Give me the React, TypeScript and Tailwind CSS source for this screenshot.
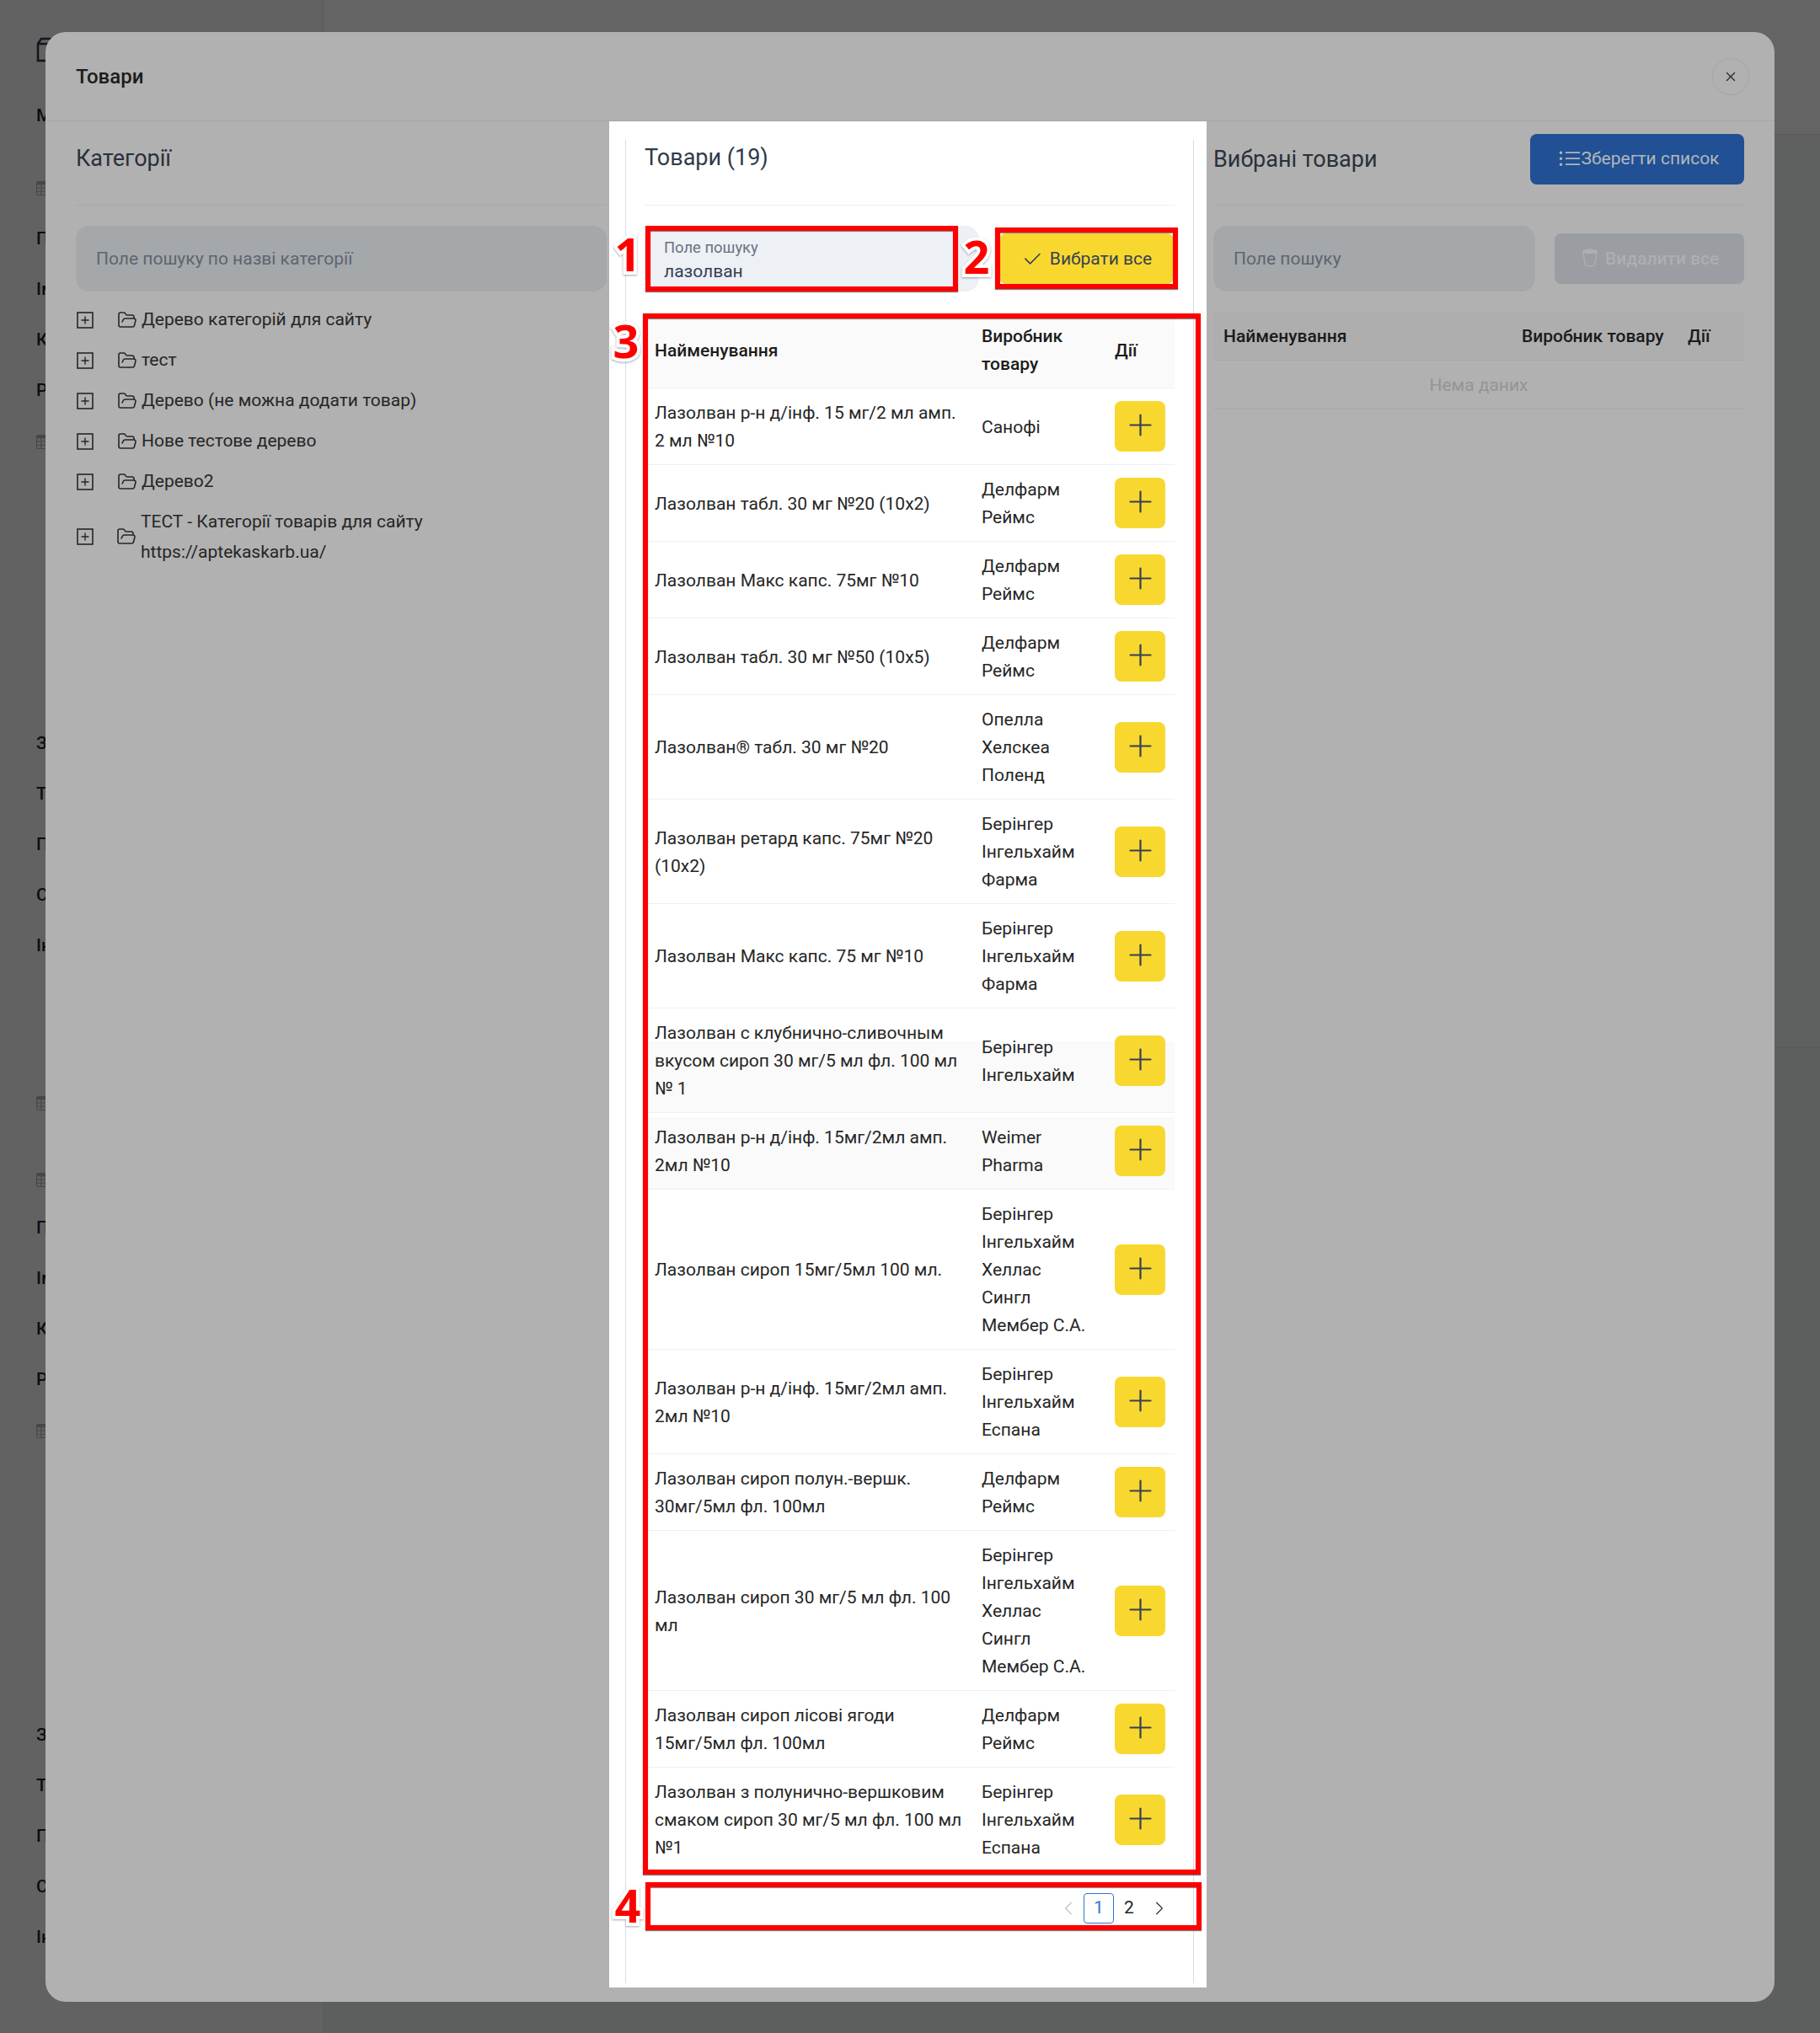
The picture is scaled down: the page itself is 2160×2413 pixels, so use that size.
import React from "react";
import {BsCheck2, BsChevronLeft, BsChevronRight, BsListUl, BsTable, BsTrash2, BsX} from "react-icons/bs";
import {FolderOpen, Plus} from "lucide-react";

const categories = [
    "Дерево категорій для сайту",
    "тест",
    "Дерево (не можна додати товар)",
    "Нове тестове дерево",
    "Дерево2",
];

const products = [
    {name: "Лазолван р-н д/інф. 15 мг/2 мл амп. 2 мл №10", maker: "Санофі"},
    {name: "Лазолван табл. 30 мг №20 (10х2)", maker: "Делфарм Реймс"},
    {name: "Лазолван Макс капс. 75мг №10", maker: "Делфарм Реймс"},
    {name: "Лазолван табл. 30 мг №50 (10х5)", maker: "Делфарм Реймс"},
    {name: "Лазолван® табл. 30 мг №20", maker: "Опелла Хелскеа Поленд"},
    {name: "Лазолван ретард капс. 75мг №20 (10х2)", maker: "Берінгер Інгельхайм Фарма"},
    {name: "Лазолван Макс капс. 75 мг №10", maker: "Берінгер Інгельхайм Фарма"},
    {
        name: "Лазолван с клубнично-сливочным вкусом сироп 30 мг/5 мл фл. 100 мл № 1",
        maker: "Берінгер Інгельхайм",
        rowBg: "bg-[linear-gradient(to_bottom,#fff_39px,#fafafa_39px)]",
    },
    {
        name: "Лазолван р-н д/інф. 15мг/2мл амп. 2мл №10",
        maker: "Weimer Pharma",
        rowBg: "bg-[linear-gradient(to_bottom,#fff_5px,#fafafa_5px)]",
    },
    {name: "Лазолван сироп 15мг/5мл 100 мл.", maker: "Берінгер Інгельхайм Хеллас Сингл Мембер С.А."},
    {name: "Лазолван р-н д/інф. 15мг/2мл амп. 2мл №10", maker: "Берінгер Інгельхайм Еспана"},
    {name: "Лазолван сироп полун.-вершк. 30мг/5мл фл. 100мл", maker: "Делфарм Реймс"},
    {name: "Лазолван сироп 30 мг/5 мл фл. 100 мл", maker: "Берінгер Інгельхайм Хеллас Сингл Мембер С.А."},
    {name: "Лазолван сироп лісові ягоди 15мг/5мл фл. 100мл", maker: "Делфарм Реймс"},
    {name: "Лазолван з полунично-вершковим смаком сироп 30 мг/5 мл фл. 100 мл №1", maker: "Берінгер Інгельхайм Еспана"},
];

function SideRow({label, icon}: {label?: string; icon?: boolean}) {
    return (
        <div className="flex h-[60px] items-center text-[21px] font-medium text-[#0d0d12]">
            {icon ? <BsTable size={17} className="text-[#47474b]"/> : label}
        </div>
    );
}

function TreeSquare() {
    return (
        <svg width="20" height="20" viewBox="0 0 20 20" fill="none" stroke="#262626" className="shrink-0">
            <rect x="1" y="1" width="18" height="18" strokeWidth="1.6"/>
            <path d="M5.5 10h9M10 5.5v9" strokeWidth="1.4"/>
        </svg>
    );
}

function Marker({className, children}: {className: string; children: string}) {
    return (
        <span
            className={`absolute -translate-x-1/2 -translate-y-1/2 font-['Open_Sans',sans-serif] text-[54px] leading-none font-bold text-[#ff0000] [-webkit-text-stroke:8px_#fff] [paint-order:stroke_fill] drop-shadow-[0_1px_1px_rgba(0,0,0,0.35)] ${className}`}
        >
            {children}
        </span>
    );
}

export default function App() {
    const redBox = "absolute border-[6px] border-[#ff0000] shadow-[0_1px_1px_rgba(0,0,0,0.5),inset_0_1px_1px_rgba(0,0,0,0.5)]";

    return (
        <div className="relative flex h-[2413px] w-[2160px] overflow-hidden bg-[#626262] font-['Roboto',sans-serif]">
            {/* page behind the dialog */}
            <div className="w-[384px] shrink-0 border-r border-[#5a5a5a] pt-[44px] pl-[43px]">
                <svg width="32" height="30" viewBox="0 0 32 30" fill="none" stroke="#14161c" strokeWidth="2.5">
                    <path d="M2 8l4-6h24v26H2zM2 8h28"/>
                </svg>
                <div className="mt-[34px]"><SideRow label="М"/></div>
                <div className="mt-[25px]"><SideRow icon/></div>
                <div className="mt-px">
                    <SideRow label="П"/>
                    <SideRow label="Ім"/>
                    <SideRow label="К"/>
                    <SideRow label="Р"/>
                    <SideRow icon/>
                </div>
                <div className="mt-[299px]">
                    <SideRow label="З"/>
                    <SideRow label="Т"/>
                    <SideRow label="П"/>
                    <SideRow label="С"/>
                    <SideRow label="Ін"/>
                </div>
                <div className="mt-[126px]"><SideRow icon/></div>
                <div className="mt-[31px]"><SideRow icon/></div>
                <div className="-mt-[2px]">
                    <SideRow label="П"/>
                    <SideRow label="Ім"/>
                    <SideRow label="К"/>
                    <SideRow label="Р"/>
                    <SideRow icon/>
                </div>
                <div className="mt-[302px]">
                    <SideRow label="З"/>
                    <SideRow label="Т"/>
                    <SideRow label="П"/>
                    <SideRow label="С"/>
                    <SideRow label="Ін"/>
                </div>
            </div>
            <div className="flex-1">
                <div className="h-[160px] border-b border-[#5a5a5a] bg-[#646464]"/>
                <div className="h-[1084px] border-b border-[#585a5a] bg-[#5e6060]"/>
                <div className="h-[1169px] bg-[#5d5f5f]"/>
            </div>

            {/* dialog */}
            <div className="absolute top-[38px] left-[54px] flex h-[2338px] w-[2052px] flex-col rounded-[24px] bg-[#b1b1b1]">
                <div className="flex h-[106px] shrink-0 items-center justify-between border-b border-[#a6a6a6] pr-[30px] pl-[36px]">
                    <h2 className="text-[24px] font-medium text-[#1c1c1c]">Товари</h2>
                    <button className="flex h-[44px] w-[44px] items-center justify-center rounded-full border border-[#a2a6ac] text-[#2d3340]">
                        <BsX size={24}/>
                    </button>
                </div>

                <div className="grid flex-1 grid-cols-3 gap-[45px] px-[36px] pb-[17px]">
                    {/* categories */}
                    <div className="pt-[15px]">
                        <div className="flex h-[85px] items-start border-b border-[#a7a7a7]">
                            <h3 className="flex h-[58px] items-center text-[27px] text-[#2a303a]">Категорії</h3>
                        </div>
                        <div className="mt-[24px] flex h-[78px] items-center rounded-[16px] bg-[#a4a8ab] pt-px pl-[24px] text-[21px] text-[#5e656e]">
                            Поле пошуку по назві категорії
                        </div>
                        <ul className="mt-[9px] text-[21px] text-[#262626]">
                            {categories.map(item => (
                                <li key={item} className="flex h-[48px] items-center pt-[2px] pl-px">
                                    <TreeSquare/>
                                    <FolderOpen size={24} strokeWidth={1.6} className="ml-[28px] shrink-0"/>
                                    <span className="ml-[5px]">{item}</span>
                                </li>
                            ))}
                            <li className="mt-[6px] flex items-center pl-px">
                                <TreeSquare/>
                                <FolderOpen size={24} strokeWidth={1.6} className="ml-[27px] shrink-0"/>
                                <span className="ml-[5px] leading-[36px]">
                                    ТЕСТ - Категорії товарів для сайту<br/>https://aptekaskarb.ua/
                                </span>
                            </li>
                        </ul>
                    </div>

                    {/* products, the highlighted column */}
                    <div className="-mr-[37px] -ml-[42px] flex flex-col bg-white pt-[22px] pr-[15px] pb-[5px] pl-[19px]">
                        <div className="flex-1 border-x border-[#d5dee8] px-[22px]">
                            <div className="h-[78px] border-b border-[#f0f0f0]">
                                <h3 className="flex h-[43px] items-center text-[27px] text-[#2f3a4a]">Товари (19)</h3>
                            </div>
                            <div className="mt-[24px] flex h-[78px] items-center">
                                <div className="flex h-[78px] w-[397px] flex-col justify-center rounded-[16px] bg-[#edf0f5] pt-[3px] pl-[23px]">
                                    <span className="text-[18.4px] leading-[26px] text-[#6b7280]">Поле пошуку</span>
                                    <span className="text-[21px] leading-[30px] text-[#374151]">лазолван</span>
                                </div>
                                <button className="ml-[24px] flex h-[60px] w-[207px] items-center justify-center gap-[8px] rounded-[8px] bg-[#f8d82f] pt-px text-[21px] text-[#374151]">
                                    <BsCheck2 size={26}/>
                                    Вибрати все
                                </button>
                            </div>

                            <table className="mt-[24px] w-full table-fixed border-collapse text-[21px] leading-[33px] text-[#262626]">
                                <colgroup>
                                    <col className="w-[388px]"/>
                                    <col className="w-[158px]"/>
                                    <col/>
                                </colgroup>
                                <thead>
                                    <tr className="border-b border-[#f0f0f0] bg-[#fafafa] text-left font-medium text-[#1c1c1c]">
                                        <th className="px-[12px] pt-[13px] pb-[11px] font-medium">Найменування</th>
                                        <th className="px-[12px] pt-[13px] pb-[11px] font-medium">Виробник товару</th>
                                        <th className="px-[12px] pt-[13px] pb-[11px] font-medium">Дії</th>
                                    </tr>
                                </thead>
                                <tbody>
                                    {products.map((product, index) => (
                                        <tr key={index} className={`border-b border-[#f0f0f0] ${product.rowBg ?? ""}`}>
                                            <td className="pt-[13px] pr-[6px] pb-[11px] pl-[12px]">{product.name}</td>
                                            <td className="px-[12px] pt-[13px] pb-[11px]">{product.maker}</td>
                                            <td className="p-[12px]">
                                                <button className="flex h-[60px] w-[60px] items-center justify-center rounded-[8px] bg-[#f8d82f] pb-[3px] text-[#374151]">
                                                    <Plus size={41} strokeWidth={1.3}/>
                                                </button>
                                            </td>
                                        </tr>
                                    ))}
                                </tbody>
                            </table>

                            <div className="mt-[25px] flex justify-end text-[21px] text-[#262626]">
                                <span className="flex h-[36px] w-[36px] items-center justify-center text-[#bdbdbd]"><BsChevronLeft size={18}/></span>
                                <span className="flex h-[36px] w-[36px] items-center justify-center rounded-[4px] border border-[#2f74d0] text-[#2f74d0]">1</span>
                                <span className="flex h-[36px] w-[36px] items-center justify-center">2</span>
                                <span className="flex h-[36px] w-[36px] items-center justify-center"><BsChevronRight size={18}/></span>
                            </div>
                        </div>
                    </div>

                    {/* selected products */}
                    <div className="pt-[15px]">
                        <div className="flex h-[85px] items-start justify-between border-b border-[#a7a7a7]">
                            <h3 className="flex h-[60px] items-center text-[27px] text-[#2a303a]">Вибрані товари</h3>
                            <button className="flex h-[60px] w-[254px] items-center justify-center rounded-[8px] bg-[#215094] pl-[3px] text-[21px] text-[#b3b7bc]">
                                <BsListUl size={28}/>
                                Зберегти список
                            </button>
                        </div>
                        <div className="mt-[24px] flex h-[78px] items-center">
                            <div className="flex h-[78px] w-[383px] items-center rounded-[16px] bg-[#a4a8ab] pt-px pl-[24px] text-[21px] text-[#5e656e]">
                                Поле пошуку
                            </div>
                            <button className="ml-[23px] flex h-[60px] w-[225px] items-center justify-center gap-[6px] rounded-[8px] bg-[#9a9da1] pt-px text-[21px] font-medium text-[#adafb2]">
                                <BsTrash2 size={24} className="-mt-[4px]"/>
                                Видалити все
                            </button>
                        </div>
                        <table className="mt-[24px] w-full table-fixed border-collapse text-[21px] leading-[33px]">
                            <colgroup>
                                <col className="w-[354px]"/>
                                <col className="w-[197px]"/>
                                <col/>
                            </colgroup>
                            <thead>
                                <tr className="border-b border-[#a7a7a7] bg-[#aeaeae] text-left text-[#1a1a1a]">
                                    <th className="px-[12px] pt-[13px] pb-[11px] font-medium">Найменування</th>
                                    <th className="px-[12px] pt-[13px] pb-[11px] font-medium">Виробник товару</th>
                                    <th className="px-[12px] pt-[13px] pb-[11px] font-medium">Дії</th>
                                </tr>
                            </thead>
                            <tbody>
                                <tr className="border-b border-[#a7a7a7]">
                                    <td colSpan={3} className="px-[12px] pt-[13px] pb-[11px] text-center text-[#949494]">Нема даних</td>
                                </tr>
                            </tbody>
                        </table>
                    </div>
                </div>
            </div>

            {/* tutorial marks drawn over the screenshot */}
            <div className={`${redBox} top-[268px] left-[766px] h-[78px] w-[371px]`}/>
            <div className={`${redBox} top-[270px] left-[1181px] h-[73px] w-[217px]`}/>
            <div className={`${redBox} top-[372px] left-[763px] h-[1853px] w-[662px]`}/>
            <div className={`${redBox} top-[2234px] left-[766px] h-[57px] w-[660px]`}/>
            <Marker className="top-[301px] left-[745px]">1</Marker>
            <Marker className="top-[304px] left-[1159px]">2</Marker>
            <Marker className="top-[404px] left-[743px]">3</Marker>
            <Marker className="top-[2261px] left-[745px]">4</Marker>
        </div>
    );
}
